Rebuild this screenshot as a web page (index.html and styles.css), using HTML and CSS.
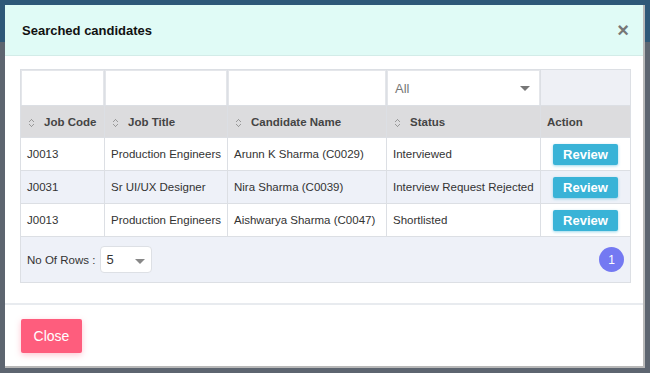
FILE: index.html
```html
<!DOCTYPE html>
<html lang="en">
<head>
  <meta charset="UTF-8" />
  <title>Searched candidates</title>
  <link rel="stylesheet" href="styles.css">
</head>
<body>

  <div class="modal">
    <div class="modal-header">
      <h4>Searched candidates</h4>
      <span class="close-x">&times;</span>
    </div>

    <div class="modal-body">
      <table class="grid">
        <colgroup>
          <col style="width: 84px">
          <col style="width: 123px">
          <col style="width: 159px">
          <col style="width: 154px">
          <col style="width: 90px">
        </colgroup>
        <thead>
          <tr class="filters">
            <td><div class="filter-box"></div></td>
            <td><div class="filter-box"></div></td>
            <td><div class="filter-box"></div></td>
            <td><div class="filter-box select-box">All<span class="caret"></span></div></td>
            <td class="empty"></td>
          </tr>
          <tr class="heads">
            <th><span class="sort"></span>Job Code</th>
            <th><span class="sort"></span>Job Title</th>
            <th><span class="sort"></span>Candidate Name</th>
            <th><span class="sort"></span>Status</th>
            <th class="action">Action</th>
          </tr>
        </thead>
        <tbody>
          <tr>
            <td>J0013</td>
            <td>Production Engineers</td>
            <td>Arunn K Sharma (C0029)</td>
            <td>Interviewed</td>
            <td class="btn-cell"><button class="review">Review</button></td>
          </tr>
          <tr class="alt">
            <td>J0031</td>
            <td>Sr UI/UX Designer</td>
            <td>Nira Sharma (C0039)</td>
            <td>Interview Request Rejected</td>
            <td class="btn-cell"><button class="review">Review</button></td>
          </tr>
          <tr>
            <td>J0013</td>
            <td>Production Engineers</td>
            <td>Aishwarya Sharma (C0047)</td>
            <td>Shortlisted</td>
            <td class="btn-cell"><button class="review">Review</button></td>
          </tr>
        </tbody>
        <tfoot>
          <tr>
            <td colspan="5">
              <div class="pager">
                <div class="rows">
                  No Of Rows :
                  <div class="rows-select">5<span class="caret"></span></div>
                </div>
                <span class="page">1</span>
              </div>
            </td>
          </tr>
        </tfoot>
      </table>
    </div>

    <div class="modal-footer">
      <button class="close-btn">Close</button>
    </div>
  </div>

</body>
</html>
```

FILE: styles.css
```css
body {
  margin: 0;
  font-family: "Liberation Sans", Arial, sans-serif;
  background: linear-gradient(to bottom, #2e5878 0, #2e5878 42px, #5d6570 42px);
  min-height: 373px;
  padding: 5px 0 0 5px;
  box-sizing: border-box;
}

.modal {
  width: 640px;
  background: #fff;
  border-right: 2px solid #b8b8b8;
  border-bottom: 2px solid #b8b8b8;
  box-sizing: border-box;
}

.modal-header {
  height: 51px;
  background: #e0fbf6;
  border-bottom: 1px solid #d3ece8;
  display: flex;
  align-items: center;
  justify-content: space-between;
  padding: 0 14px 0 17px;
  box-sizing: border-box;
}

.modal-header h4 {
  margin: 0;
  font-size: 13px;
  font-weight: bold;
  color: #111;
}

.close-x {
  font-size: 20px;
  font-weight: bold;
  color: #777;
  line-height: 1;
}

.modal-body {
  padding: 13px 14px 20px 15px;
}

.grid {
  width: 610px;
  border-collapse: collapse;
  table-layout: fixed;
  font-size: 11.5px;
  color: #333;
  border: 1px solid #dcdfe4;
}

.grid td, .grid th {
  border: 1px solid #dcdfe4;
}

.filters td {
  background: #e4e6ea;
  padding: 1px 1px 0 1px;
  height: 34px;
}

.filters td.empty {
  background: #eef0f5;
}

.filter-box {
  background: #fff;
  height: 34px;
  box-sizing: border-box;
}

.select-box {
  display: flex;
  align-items: center;
  justify-content: space-between;
  padding: 0 9px 0 7px;
  font-size: 13px;
  color: #777;
}

.caret {
  width: 0;
  height: 0;
  border-left: 5px solid transparent;
  border-right: 5px solid transparent;
  border-top: 5px solid #777;
}

.heads th {
  background: #dcdcde;
  height: 31px;
  text-align: left;
  font-weight: bold;
  color: #444;
  padding: 0 7px 0 8px;
  white-space: nowrap;
}

.heads th.action {
  padding-left: 6px;
}

.sort {
  display: inline-block;
  width: 5px;
  height: 8px;
  margin-right: 10px;
  vertical-align: -1px;
  background:
    linear-gradient(135deg, transparent 45%, #999 45%, #999 60%, transparent 60%) left top / 3px 3px no-repeat,
    linear-gradient(225deg, transparent 45%, #999 45%, #999 60%, transparent 60%) right top / 3px 3px no-repeat,
    linear-gradient(45deg, transparent 45%, #999 45%, #999 60%, transparent 60%) left bottom / 3px 3px no-repeat,
    linear-gradient(315deg, transparent 45%, #999 45%, #999 60%, transparent 60%) right bottom / 3px 3px no-repeat;
}

tbody td {
  height: 32px;
  padding: 0 6px;
  white-space: nowrap;
  overflow: hidden;
  vertical-align: middle;
}

tbody tr.alt td {
  background: #eef1f8;
}

.btn-cell {
  text-align: center;
}

.review {
  background: #39b3d7;
  color: #fff;
  border: none;
  border-radius: 2px;
  width: 65px;
  height: 21px;
  font-family: inherit;
  font-size: 13px;
  font-weight: bold;
  box-shadow: 0 1px 3px rgba(57, 179, 215, 0.5);
  padding: 0;
}

tfoot td {
  background: #eef1f8;
  height: 45px;
  padding: 0 6px;
}

.pager {
  display: flex;
  align-items: center;
  justify-content: space-between;
}

.rows {
  display: flex;
  align-items: center;
  gap: 5px;
  color: #333;
}

.rows-select {
  width: 52px;
  height: 27px;
  background: #fff;
  border: 1px solid #dde0e5;
  border-radius: 4px;
  box-sizing: border-box;
  display: flex;
  align-items: center;
  justify-content: space-between;
  padding: 0 6px 0 5px;
  font-size: 13px;
  color: #333;
}

.rows-select .caret {
  margin-top: 4px;
  border-top-color: #888;
}

.page {
  width: 25px;
  height: 25px;
  border-radius: 50%;
  background: #7479f2;
  color: #fff;
  font-size: 12px;
  display: flex;
  align-items: center;
  justify-content: center;
  margin-right: 0;
}

.modal-footer {
  border-top: 2px solid #e8ebef;
  padding: 14px 16px 13px;
}

.close-btn {
  background: #fe5d7d;
  color: #fff;
  border: none;
  border-radius: 2px;
  width: 61px;
  height: 34px;
  font-family: inherit;
  font-size: 14px;
  box-shadow: 0 2px 6px rgba(254, 93, 125, 0.35);
}
```
